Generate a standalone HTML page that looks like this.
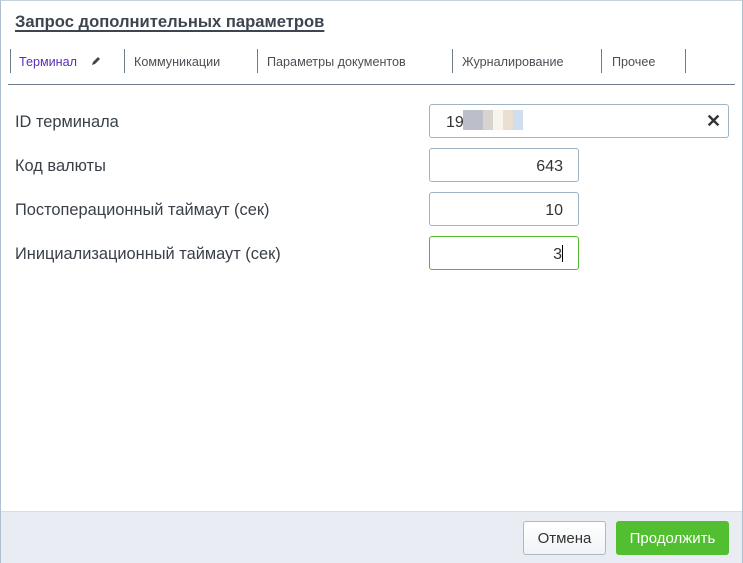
<!DOCTYPE html>
<html><head><meta charset="utf-8"><style>
body{margin:0;width:743px;height:563px;background:#fff;font-family:"Liberation Sans",sans-serif;position:relative;overflow:hidden}
.frame{position:absolute;left:0;top:0;width:741px;height:561px;border:1px solid #aebfcf;border-top-color:#c5d2de}
.abs{position:absolute}
.title{left:15px;top:12px;font-size:16.6px;font-weight:bold;color:#3d4650;text-decoration:underline;text-decoration-thickness:2px;text-underline-offset:3px}
.tab{top:55px;font-size:12.6px;color:#4a4f55}
.sep{top:49px;width:1px;height:24px;background:#6f7d8a}
.lbl{left:15px;font-size:16.4px;color:#3a4048}
.inp{left:429px;border:1px solid #9fb5c6;border-radius:3px;background:#fff;box-sizing:border-box;font-size:16px;color:#333;text-align:right;padding-right:15px;line-height:36px}
</style></head><body>
<div class="frame"></div>
<div class="abs title">Запрос дополнительных параметров</div>
<div class="abs sep" style="left:10px"></div>
<div class="abs tab" style="left:19px;color:#5a2fb8">Терминал</div>
<svg class="abs" style="left:91px;top:56px" width="10" height="10" viewBox="0 0 10 10"><path d="M1 9 L2 6 L7 1 L9 3 L4 8 Z" fill="#444"/></svg>
<div class="abs sep" style="left:124px"></div>
<div class="abs tab" style="left:134px">Коммуникации</div>
<div class="abs sep" style="left:257px"></div>
<div class="abs tab" style="left:267px">Параметры документов</div>
<div class="abs sep" style="left:452px"></div>
<div class="abs tab" style="left:462px">Журналирование</div>
<div class="abs sep" style="left:601px"></div>
<div class="abs tab" style="left:612px">Прочее</div>
<div class="abs sep" style="left:685px"></div>
<div class="abs" style="left:8px;top:84px;width:727px;height:1px;background:#6f7d8a"></div>

<div class="abs lbl" style="top:113px">ID терминала</div>
<div class="abs lbl" style="top:157px">Код валюты</div>
<div class="abs lbl" style="top:201px">Постоперационный таймаут (сек)</div>
<div class="abs lbl" style="top:245px">Инициализационный таймаут (сек)</div>

<div class="abs inp" style="top:104px;width:300px;height:34px;text-align:left;padding-left:16px">19</div>
<div class="abs" style="left:463px;top:110px;width:60px;height:20px;background:linear-gradient(90deg,#b0b4c0 0,#b0b4c0 20px,#d0ccc8 20px,#d0ccc8 30px,#f5f2e8 30px,#f5f2e8 40px,#e8d8c8 40px,#e8d8c8 50px,#c5d8ec 50px);opacity:.85"></div>
<div class="abs" style="left:706px;top:111px;font-size:18px;color:#333;font-weight:bold">✕</div>
<div class="abs inp" style="top:148px;width:150px;height:34px">643</div>
<div class="abs inp" style="top:192px;width:150px;height:34px">10</div>
<div class="abs inp" style="top:236px;width:150px;height:34px;border-color:#52b830">3<span style="display:inline-block;width:1px;height:17px;background:#000;vertical-align:-3px"></span></div>

<div class="abs" style="left:1px;top:511px;width:741px;height:51px;background:#e9edf3;border-top:1px solid #d5dde6"></div>
<div class="abs" style="left:523px;top:521px;width:83px;height:34px;box-sizing:border-box;border:1px solid #a9b9c8;border-radius:3px;background:linear-gradient(#fff,#f0f3f6);font-size:15px;color:#333;text-align:center;line-height:34px">Отмена</div>
<div class="abs" style="left:616px;top:521px;width:113px;height:34px;border-radius:3px;background:#52bf30;font-size:15px;color:#fff;text-align:center;line-height:36px">Продолжить</div>
</body></html>
